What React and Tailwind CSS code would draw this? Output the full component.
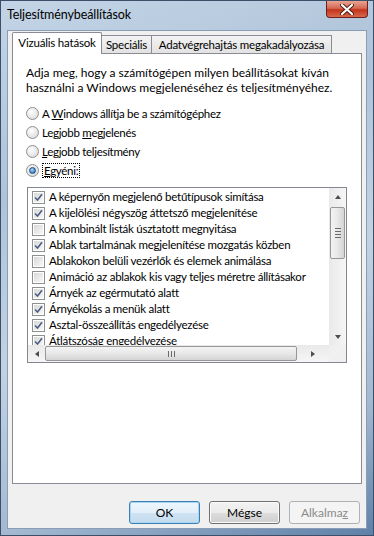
const FONT = { fontFamily: 'Lato, "Liberation Sans", sans-serif' }

const items = [
  { label: 'A képernyőn megjelenő betűtípusok simítása', checked: true },
  { label: 'A kijelölési négyszög áttetsző megjelenítése', checked: true },
  { label: 'A kombinált listák úsztatott megnyitása', checked: false },
  { label: 'Ablak tartalmának megjelenítése mozgatás közben', checked: true },
  { label: 'Ablakokon belüli vezérlők és elemek animálása', checked: false },
  { label: 'Animáció az ablakok kis vagy teljes méretre állításakor', checked: false },
  { label: 'Árnyék az egérmutató alatt', checked: true },
  { label: 'Árnyékolás a menük alatt', checked: true },
  { label: 'Asztal-összeállítás engedélyezése', checked: true },
  { label: 'Átlátszóság engedélyezése', checked: true },
]

function Radio({ checked, children }) {
  return (
    <div className="flex items-center h-[19px] gap-[3px]">
      <span className="w-[13px] h-[13px] rounded-full border border-[#8e8f8f] bg-[radial-gradient(circle_at_40%_35%,#ffffff,#d4d4d4)] flex items-center justify-center shrink-0">
        {checked && (
          <span className="w-[7px] h-[7px] rounded-full bg-[radial-gradient(circle_at_40%_35%,#a6d8ff,#1c5da3)] border border-[#1b4f8a]" />
        )}
      </span>
      <span className="leading-none text-[11.5px] tracking-[-0.3px]">{children}</span>
    </div>
  )
}

function Checkbox({ checked }) {
  return (
    <span className="w-[13px] h-[13px] border border-[#8e8f8f] bg-white p-px shrink-0 flex">
      <span className="flex-1 bg-gradient-to-br from-[#d9d9d9] to-[#f8f8f8] flex items-center justify-center">
        {checked && (
          <svg width="9" height="9" viewBox="0 0 9 9">
            <path d="M1 4.5 L3.5 7 L8 1.2" fill="none" stroke="#4b5d86" strokeWidth="1.6" />
          </svg>
        )}
      </span>
    </span>
  )
}

function Arrow({ dir }) {
  const pts = {
    up: '1,5 4,1 7,5',
    down: '1,1 4,5 7,1',
    left: '5,1 1,4 5,7',
    right: '1,1 5,4 1,7',
  }[dir]
  const w = dir === 'up' || dir === 'down' ? 8 : 6
  const h = dir === 'up' || dir === 'down' ? 6 : 8
  return (
    <svg width={w} height={h} viewBox={`0 0 ${w} ${h}`}>
      <polygon points={pts} fill="#4d4d4d" />
    </svg>
  )
}

function Button({ children, variant }) {
  const base = 'w-[71px] h-[23px] rounded-[3px] border flex items-center justify-center text-[12px]'
  if (variant === 'disabled') {
    return <div className={`${base} border-[#adb2b5] bg-[#f4f4f4] text-[#8a8a8a]`}>{children}</div>
  }
  if (variant === 'default') {
    return (
      <div className={`${base} border-[#3c7fb1] bg-[linear-gradient(to_bottom,#eef6fc_0%,#e3eff9_50%,#cfe3f3_51%,#c4dcef_100%)] shadow-[inset_0_0_0_1px_#a9d6f5]`}>
        {children}
      </div>
    )
  }
  return (
    <div className={`${base} border-[#707070] bg-[linear-gradient(to_bottom,#f2f2f2_0%,#ebebeb_50%,#dddddd_51%,#cfcfcf_100%)] shadow-[inset_0_0_0_1px_#fcfcfc]`}>
      {children}
    </div>
  )
}

export default function App() {
  return (
    <div
      style={FONT}
      className="w-[374px] h-[536px] flex flex-col text-black border border-[#3b4f68] bg-[linear-gradient(160deg,#c3d4e6_0%,#aec3d9_30%,#c2d2e3_55%,#a3b9d1_80%,#5f80a8_100%)] overflow-hidden"
    >
      {/* title bar */}
      <div className="h-[29px] flex items-start shrink-0">
        <div className="pl-[6px] pt-[8px] text-[12.5px] tracking-[-0.1px] leading-none flex-1">Teljesítménybeállítások</div>
        <div className="mr-[5px] w-[42px] h-[17px] rounded-b-[4px] border border-t-0 border-[#6e2020] bg-[linear-gradient(to_bottom,#e8a493_0%,#d46a52_45%,#c3341c_55%,#d7694b_100%)] flex items-center justify-center">
          <svg width="14" height="11" viewBox="0 0 14 11">
            <path d="M2 1 L12 10 M12 1 L2 10" stroke="#4a1a14" strokeWidth="4" strokeLinecap="round" />
            <path d="M2 1 L12 10 M12 1 L2 10" stroke="#ffffff" strokeWidth="2.2" strokeLinecap="round" />
          </svg>
        </div>
      </div>

      {/* client area */}
      <div className="mx-[6px] mb-[6px] flex-1 flex flex-col bg-[#f0f0f0] border border-[#8a9db5] px-[4px] pt-[1px]">
        {/* tabs */}
        <div className="flex items-end h-[22px] text-[11.5px] tracking-[-0.2px] leading-none relative z-10 -mb-px whitespace-nowrap">
          <div className="h-[22px] w-[90px] bg-white border border-b-0 border-[#898c95] rounded-t-[2px] flex items-center justify-center pb-[1px]">
            Vizuális hatások
          </div>
          <div className="h-[19px] w-[50px] bg-gradient-to-b from-[#f4f4f4] to-[#e2e2e2] border border-l-0 border-[#898c95] flex items-center justify-center">
            Speciális
          </div>
          <div className="h-[19px] w-[180px] bg-gradient-to-b from-[#f4f4f4] to-[#e2e2e2] border border-l-0 border-[#898c95] flex items-center justify-center">
            Adatvégrehajtás megakadályozása
          </div>
        </div>

        {/* tab panel */}
        <div className="h-[431px] bg-white border border-[#898c95] px-[13px] pt-[11px] text-[12px] shrink-0">
          <p className="leading-[15px] whitespace-nowrap">
            Adja meg, hogy a számítógépen milyen beállításokat kíván
            <br />
            használni a Windows megjelenéséhez és teljesítményéhez.
          </p>

          <div className="mt-[9px] flex flex-col">
            <Radio>
              A <u>W</u>indows állítja be a számítógéphez
            </Radio>
            <Radio>
              Legjobb <u>m</u>egjelenés
            </Radio>
            <Radio>
              <u>L</u>egjobb teljesítmény
            </Radio>
            <Radio checked>
              <span className="border border-dotted border-black px-px">
                <u>E</u>gyéni:
              </span>
            </Radio>
          </div>

          {/* list */}
          <div className="mt-[7px] ml-px w-[320px] h-[176px] border border-[#828790] flex flex-col bg-white">
            <div className="flex flex-1 min-h-0">
              <div className="flex-1 overflow-hidden pt-px">
                {items.map((it) => (
                  <div key={it.label} className="h-[16px] flex items-center gap-[4px] pl-[4px] whitespace-nowrap">
                    <Checkbox checked={it.checked} />
                    <span className="leading-none text-[11.5px] tracking-[-0.25px]">{it.label}</span>
                  </div>
                ))}
              </div>
              {/* vertical scrollbar */}
              <div className="w-[17px] bg-gradient-to-r from-[#e9e9e9] to-[#f6f6f6] flex flex-col items-center">
                <div className="h-[17px] flex items-center justify-center">
                  <Arrow dir="up" />
                </div>
                <div className="mt-[2px] w-[15px] h-[52px] rounded-[2px] border border-[#979797] bg-gradient-to-r from-[#f4f4f4] via-[#e8e8e8] to-[#d4d4d4] flex flex-col items-center justify-center gap-[2px]">
                  <span className="w-[6px] h-px bg-[#6b6b6b]" />
                  <span className="w-[6px] h-px bg-[#6b6b6b]" />
                  <span className="w-[6px] h-px bg-[#6b6b6b]" />
                  <span className="w-[6px] h-px bg-[#6b6b6b]" />
                </div>
                <div className="flex-1" />
                <div className="h-[17px] flex items-center justify-center">
                  <Arrow dir="down" />
                </div>
              </div>
            </div>
            {/* horizontal scrollbar */}
            <div className="h-[17px] flex shrink-0">
              <div className="flex-1 bg-gradient-to-b from-[#e9e9e9] to-[#f6f6f6] flex items-center">
                <div className="w-[17px] flex items-center justify-center">
                  <Arrow dir="left" />
                </div>
                <div className="w-[252px] h-[15px] rounded-[2px] border border-[#979797] bg-gradient-to-b from-[#f4f4f4] via-[#e8e8e8] to-[#d4d4d4] flex items-center justify-center gap-[2px]">
                  <span className="w-px h-[6px] bg-[#6b6b6b]" />
                  <span className="w-px h-[6px] bg-[#6b6b6b]" />
                  <span className="w-px h-[6px] bg-[#6b6b6b]" />
                </div>
                <div className="flex-1 flex items-center justify-center">
                  <Arrow dir="right" />
                </div>
              </div>
              <div className="w-[17px] bg-[#f0f0f0]" />
            </div>
          </div>
        </div>

        {/* buttons */}
        <div className="flex justify-end gap-[9px] mt-[17px] pr-[2px]">
          <Button variant="default">OK</Button>
          <Button>Mégse</Button>
          <Button variant="disabled">
            Alkalma<u>z</u>
          </Button>
        </div>
      </div>
    </div>
  )
}
